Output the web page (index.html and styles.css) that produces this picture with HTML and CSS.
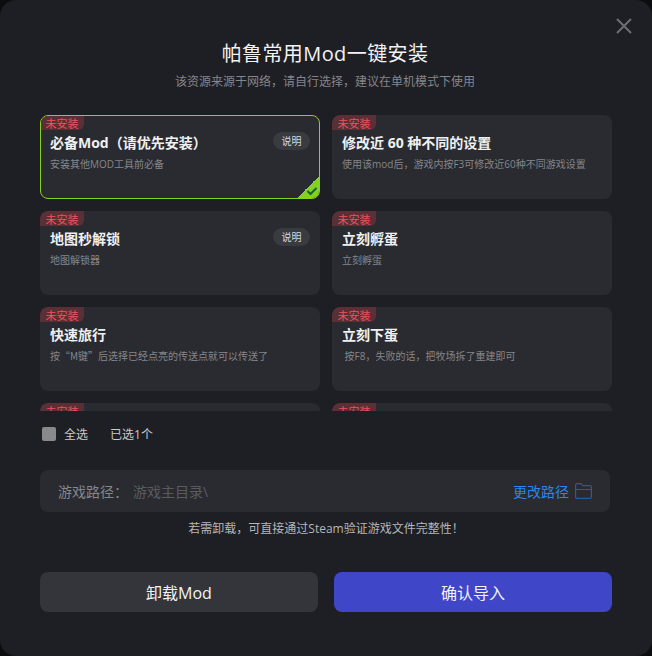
FILE: index.html
```html
<!DOCTYPE html>
<html lang="zh-CN">
<head>
<meta charset="utf-8">
<title>帕鲁常用Mod一键安装</title>
<link rel="stylesheet" href="styles.css">
</head>
<body>
<div class="modal">
  <button class="close" aria-label="关闭">
    <svg width="16" height="16" viewBox="0 0 16 16"><path d="M1 1L15 15M15 1L1 15" stroke="#6d6e73" stroke-width="2" fill="none"/></svg>
  </button>
  <h1 class="title">帕鲁常用Mod一键安装</h1>
  <p class="subtitle">该资源来源于网络，请自行选择，建议在单机模式下使用</p>
  <div class="list">
    <div class="card selected">
      <span class="tag">未安装</span>
      <div class="card-head"><h2 class="card-title">必备Mod（请优先安装）</h2><span class="pill">说明</span></div>
      <p class="card-desc">安装其他MOD工具前必备</p>
      <span class="corner"><svg width="12" height="10" viewBox="0 0 12 10"><path d="M1.5 5L4.5 8L10.5 2" stroke="#17603a" stroke-width="2" fill="none"/></svg></span>
    </div>
    <div class="card">
      <span class="tag">未安装</span>
      <div class="card-head"><h2 class="card-title">修改近 60 种不同的设置</h2></div>
      <p class="card-desc">使用该mod后，游戏内按F3可修改近60种不同游戏设置</p>
    </div>
    <div class="card">
      <span class="tag">未安装</span>
      <div class="card-head"><h2 class="card-title">地图秒解锁</h2><span class="pill">说明</span></div>
      <p class="card-desc">地图解锁器</p>
    </div>
    <div class="card">
      <span class="tag">未安装</span>
      <div class="card-head"><h2 class="card-title">立刻孵蛋</h2></div>
      <p class="card-desc">立刻孵蛋</p>
    </div>
    <div class="card">
      <span class="tag">未安装</span>
      <div class="card-head"><h2 class="card-title">快速旅行</h2></div>
      <p class="card-desc card-desc-cjk">按“M键”后选择已经点亮的传送点就可以传送了</p>
    </div>
    <div class="card">
      <span class="tag">未安装</span>
      <div class="card-head"><h2 class="card-title">立刻下蛋</h2></div>
      <p class="card-desc">&nbsp;按F8，失败的话，把牧场拆了重建即可</p>
    </div>
    <div class="card">
      <span class="tag">未安装</span>
      <div class="card-head"><h2 class="card-title">物品无限</h2></div>
      <p class="card-desc">物品无限</p>
    </div>
    <div class="card">
      <span class="tag">未安装</span>
      <div class="card-head"><h2 class="card-title">负重无限</h2></div>
      <p class="card-desc">负重无限</p>
    </div>
    <div class="card">
      <span class="tag">未安装</span>
      <div class="card-head"><h2 class="card-title">快速制作</h2></div>
      <p class="card-desc">快速制作</p>
    </div>
    <div class="card">
      <span class="tag">未安装</span>
      <div class="card-head"><h2 class="card-title">快速升级</h2></div>
      <p class="card-desc">快速升级</p>
    </div>
    <div class="card">
      <span class="tag">未安装</span>
      <div class="card-head"><h2 class="card-title">自动拾取</h2></div>
      <p class="card-desc">自动拾取</p>
    </div>
    <div class="card">
      <span class="tag">未安装</span>
      <div class="card-head"><h2 class="card-title">高清画质</h2></div>
      <p class="card-desc">高清画质</p>
    </div>
  </div>
  <div class="select-row">
    <span class="checkbox"></span>
    <span class="select-all">全选</span>
    <span class="select-count">已选1个</span>
  </div>
  <div class="path">
    <span class="path-label">游戏路径：</span>
    <span class="path-value">游戏主目录\</span>
    <span class="path-change">更改路径</span>
    <svg class="folder" width="17" height="16" viewBox="0 0 17 16"><path d="M0.6 14V2C0.6 1.2 1.1 0.7 1.9 0.7H6L8 2.7H15.1C15.9 2.7 16.4 3.2 16.4 4V14C16.4 14.8 15.9 15.3 15.1 15.3H1.9C1.1 15.3 0.6 14.8 0.6 14ZM0.6 6.5H16.4" stroke="#265c9e" stroke-width="1.2" fill="none"/></svg>
  </div>
  <p class="note">若需卸载，可直接通过Steam验证游戏文件完整性！</p>
  <div class="actions">
    <button class="btn btn-secondary">卸载Mod</button>
    <button class="btn btn-primary">确认导入</button>
  </div>
</div>
</body>
</html>
```

FILE: styles.css
```css
* {
  box-sizing: border-box;
}

html,
body {
  margin: 0;
  height: 100%;
  background: #0c0d0f;
  overflow: hidden;
}

body {
  font-family: "Open Sans", "Noto Sans CJK SC", sans-serif;
}

.modal {
  position: relative;
  width: 652px;
  height: 656px;
  border-radius: 16px;
  background: #1e1f24;
  padding: 40px 0 0 40px;
  display: flex;
  flex-direction: column;
}

.close {
  position: absolute;
  top: 18px;
  right: 20px;
  width: 16px;
  height: 16px;
  padding: 0;
  border: 0;
  background: none;
  display: flex;
}

.title {
  margin: 0 42px 0 0;
  height: 28px;
  line-height: 28px;
  font-size: 20px;
  font-weight: 400;
  letter-spacing: 0.4px;
  color: #f2f2f3;
  text-align: center;
}

.subtitle {
  margin: 5px 42px 0 0;
  height: 18px;
  line-height: 18px;
  font-size: 12px;
  color: #84858a;
  text-align: center;
}

.list {
  margin-top: 24px;
  width: 610px;
  height: 296px;
  overflow-y: scroll;
  display: grid;
  grid-template-columns: 280px 280px;
  grid-auto-rows: 84px;
  gap: 12px;
}

.list::-webkit-scrollbar {
  width: 4px;
}

.list::-webkit-scrollbar-track {
  background: transparent;
}

.list::-webkit-scrollbar-thumb {
  background: #4f5055;
  border-radius: 2px;
}

.card {
  position: relative;
  border-radius: 8px;
  background: #2a2b30;
  padding: 18px 10px 0;
  overflow: hidden;
}

.card.selected {
  border: 1px solid #84d21e;
  padding: 17px 9px 0;
}

.tag {
  position: absolute;
  top: 0;
  left: 0;
  width: 44px;
  height: 15px;
  padding-top: 1px;
  line-height: 15px;
  font-size: 11px;
  color: #f0525c;
  text-align: center;
  background: #5a2f35;
  border-radius: 8px 0 6px 0;
}

.selected .tag {
  top: -1px;
  left: -1px;
}

.card-head {
  height: 20px;
  display: flex;
  align-items: center;
  justify-content: space-between;
}

.card-title {
  margin: 0;
  font-size: 14px;
  line-height: 20px;
  font-weight: 700;
  color: #eff0f1;
}

.pill {
  width: 37px;
  height: 18px;
  line-height: 18px;
  margin-top: -4px;
  border-radius: 9px;
  background: #3a3b41;
  font-size: 10px;
  color: #d8d9db;
  text-align: center;
}

.card-desc {
  margin: 4px 0 0;
  font-size: 10px;
  line-height: 14px;
  color: #85868a;
}

.card-desc-cjk {
  font-family: "Noto Sans CJK SC", sans-serif;
}

.corner {
  position: absolute;
  right: -1px;
  bottom: -1px;
  width: 24px;
  height: 24px;
  background: linear-gradient(135deg, transparent 50%, #84d21e 50%);
}

.corner svg {
  position: absolute;
  right: 2px;
  bottom: 3px;
}

.select-row {
  margin: 15px 0 0 2px;
  height: 16px;
  display: flex;
  align-items: center;
  font-size: 12px;
  color: #c9cacc;
}

.checkbox {
  width: 14px;
  height: 14px;
  border-radius: 2px;
  background: #8a8a8c;
}

.select-all {
  margin-left: 8px;
}

.select-count {
  margin-left: 22px;
}

.path {
  margin-top: 28px;
  width: 570px;
  height: 42px;
  padding: 0 18px;
  border-radius: 8px;
  background: #2a2b30;
  display: flex;
  align-items: center;
  font-size: 14px;
}

.path-label {
  width: 75px;
  color: #85868a;
}

.path-value {
  flex: 1;
  color: #5a5b60;
}

.path-change {
  font-size: 14px;
  color: #2a86ea;
}

.folder {
  margin-left: 6px;
}

.note {
  margin: 8px 40px 0 0;
  height: 17px;
  line-height: 17px;
  font-size: 12px;
  color: #b5b6b9;
  text-align: center;
}

.actions {
  margin-top: 35px;
  width: 572px;
  display: flex;
  gap: 16px;
}

.btn {
  flex: 1;
  height: 40px;
  border: 0;
  border-radius: 8px;
  font-family: inherit;
  font-size: 16px;
  color: #f2f2f3;
}

.btn-secondary {
  background: #33353b;
}

.btn-primary {
  background: #3f46c8;
}
```
